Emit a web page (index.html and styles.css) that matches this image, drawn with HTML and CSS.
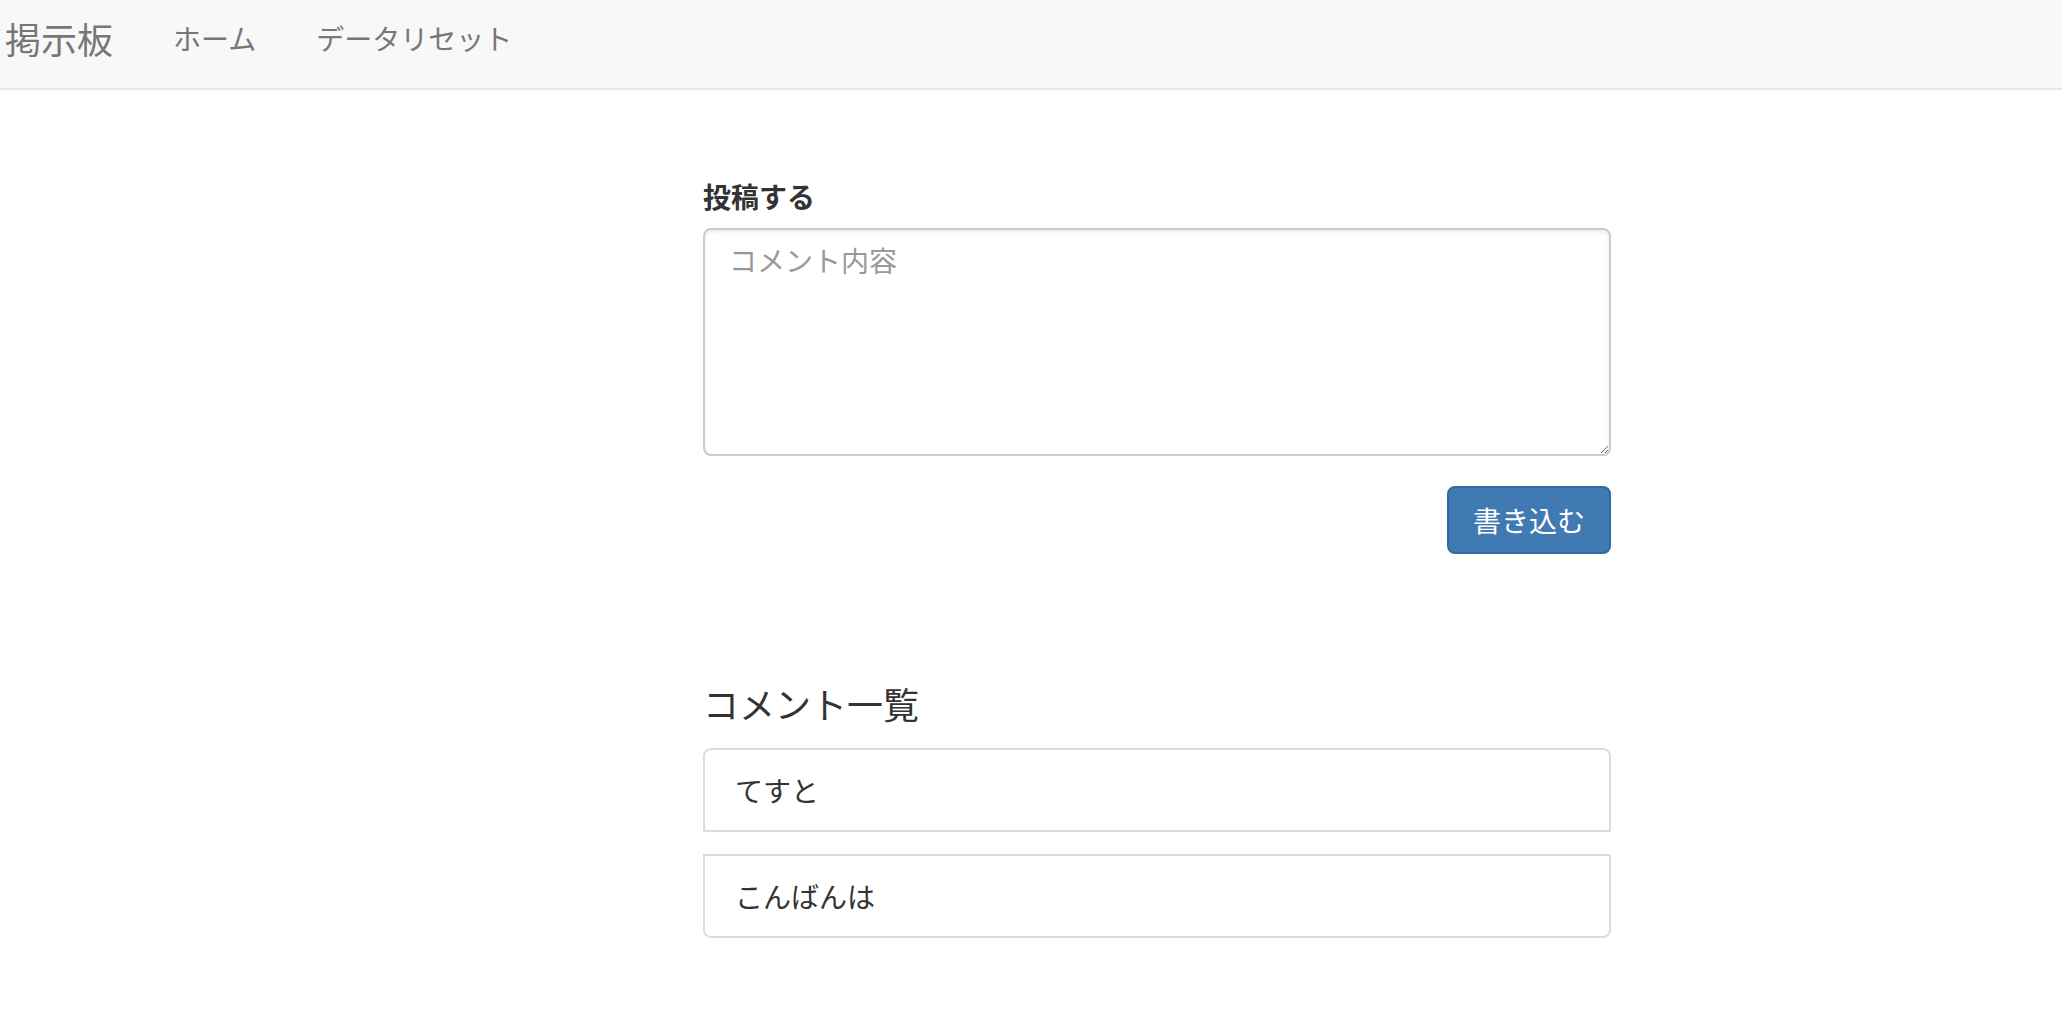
FILE: index.html
```html
<!DOCTYPE html>
<html lang="ja">
<head>
<meta charset="utf-8">
<title>掲示板</title>
<link rel="stylesheet" href="styles.css">
</head>
<body>
<nav class="navbar">
  <div class="navbar-inner">
    <a class="brand" href="#">掲示板</a>
    <ul class="nav">
      <li><a href="#">ホーム</a></li>
      <li><a href="#">データリセット</a></li>
    </ul>
  </div>
</nav>
<main class="page">
  <section class="post">
    <form class="post-form">
      <label class="post-label" for="comment">投稿する</label>
      <textarea id="comment" class="post-input" placeholder="コメント内容"></textarea>
      <div class="actions">
        <button type="button" class="btn-primary">書き込む</button>
      </div>
    </form>
  </section>
  <section class="list">
    <h4 class="list-title">コメント一覧</h4>
    <ul class="comments">
      <li class="comment">てすと</li>
      <li class="comment">こんばんは</li>
    </ul>
  </section>
</main>
</body>
</html>
```
FILE: styles.css
```css
html, body {
  margin: 0;
  padding: 0;
  background: #fff;
}
body {
  font-family: "Noto Sans CJK JP", "Liberation Sans", sans-serif;
  font-size: 28px;
  line-height: 40px;
  color: #333;
}
.navbar {
  height: 88px;
  background: #f8f8f8;
  border-bottom: 2px solid #e7e7e7;
}
.navbar-inner {
  height: 88px;
  box-sizing: border-box;
  padding: 0 0 13px 5px;
  display: flex;
  align-items: center;
}
.brand {
  font-size: 36px;
  line-height: 40px;
  color: #777;
  text-decoration: none;
  padding-right: 30px;
}
.nav {
  display: flex;
  list-style: none;
  margin: 0;
  padding: 0;
}
.nav a {
  display: block;
  padding: 0 30px;
  font-size: 28px;
  line-height: 40px;
  color: #777;
  text-decoration: none;
}
.page {
  padding: 86px 0 60px 703px;
  width: 908px;
}
.post-label {
  display: block;
  font-weight: bold;
  line-height: 40px;
  margin-bottom: 12px;
}
.post-input {
  display: block;
  width: 100%;
  height: 228px;
  box-sizing: border-box;
  margin: 0;
  padding: 10px 24px 14px;
  border: 2px solid #ccc;
  border-radius: 8px;
  box-shadow: inset 0 2px 4px rgba(0, 0, 0, 0.075);
  font-family: inherit;
  font-size: 28px;
  line-height: 40px;
  color: #555;
  background: #fff;
}
.post-input::placeholder {
  color: #999;
}
.actions {
  margin-top: 30px;
  display: flex;
  justify-content: flex-end;
}
.btn-primary {
  height: 68px;
  box-sizing: border-box;
  padding: 12px 24px;
  border: 2px solid #35689c;
  border-radius: 8px;
  background: #417ab3;
  color: #fff;
  font-family: inherit;
  font-size: 28px;
  line-height: 40px;
}
.list {
  margin-top: 129px;
}
.list-title {
  margin: 0 0 25px;
  font-size: 36px;
  line-height: 40px;
  font-weight: normal;
  color: #333;
}
.comments {
  list-style: none;
  margin: 0;
  padding: 0;
  display: flex;
  flex-direction: column;
  gap: 22px;
}
.comment {
  padding: 20px 30px;
  border: 2px solid #ddd;
  line-height: 40px;
  background: #fff;
}
.comment:first-child {
  border-radius: 8px 8px 0 0;
}
.comment:last-child {
  border-radius: 0 0 8px 8px;
}
```
